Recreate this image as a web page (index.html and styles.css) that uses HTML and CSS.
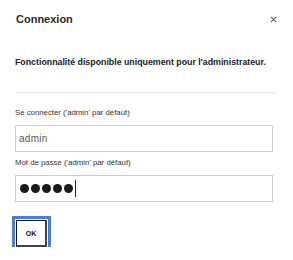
FILE: index.html
```html
<!DOCTYPE html>
<html lang="fr">
<head>
<meta charset="utf-8">
<title>Connexion</title>
<link rel="stylesheet" href="styles.css">
</head>
<body>
<div class="dialog">
  <div class="header">
    <h1 class="title">Connexion</h1>
    <button class="close" type="button" aria-label="Fermer">
      <svg width="7" height="7" viewBox="0 0 7 7"><path d="M0.8 0.8L6.2 6.2M6.2 0.8L0.8 6.2" stroke="#666" stroke-width="1.1" fill="none"/></svg>
    </button>
  </div>
  <p class="notice">Fonctionnalité disponible uniquement pour l'administrateur.</p>
  <hr class="divider">
  <form class="form">
    <label class="label">Se connecter ('admin' par défaut)</label>
    <div class="field">admin</div>
    <label class="label">Mot de passe ('admin' par défaut)</label>
    <div class="field password"><span class="dot"></span><span class="dot"></span><span class="dot"></span><span class="dot"></span><span class="dot"></span><span class="caret"></span></div>
    <button class="ok" type="button">OK</button>
  </form>
</div>
</body>
</html>
```

FILE: styles.css
```css
html, body {
  margin: 0;
  padding: 0;
  background: #fff;
}
body {
  font-family: "Liberation Sans", Arial, sans-serif;
  color: #222;
}
.dialog {
  width: 293px;
  box-sizing: border-box;
  padding: 12px 16px 0 15px;
}
.header {
  display: flex;
  justify-content: space-between;
  align-items: center;
  height: 15px;
}
.title {
  margin: 0 0 0 1px;
  font-size: 11px;
  line-height: 15px;
  font-weight: bold;
  color: #2a2a2a;
}
.close {
  border: 0;
  background: none;
  padding: 0;
  width: 7px;
  height: 7px;
  display: flex;
}
.notice {
  margin: 30px 0 0;
  font-size: 8.8px;
  line-height: 11px;
  font-weight: bold;
  color: #222;
}
.divider {
  margin: 24px 0 0;
  border: 0;
  height: 1px;
  background: #e6e6e6;
}
.form {
  display: flex;
  flex-direction: column;
  align-items: flex-start;
}
.label {
  margin-top: 15px;
  font-size: 7.8px;
  line-height: 10px;
  color: #333;
}
.field {
  margin-top: 7px;
  width: 258px;
  height: 27px;
  box-sizing: border-box;
  border: 1px solid #cfcfcf;
  padding: 0 3px;
  display: flex;
  align-items: center;
  font-size: 10px;
  letter-spacing: 0.3px;
  color: #555;
}
.field + .label {
  margin-top: 6px;
}
.password {
  padding-left: 4px;
  gap: 2px;
}
.dot {
  width: 9px;
  height: 9px;
  border-radius: 50%;
  background: #1a1a1a;
}
.caret {
  width: 1px;
  height: 17px;
  background: #222;
  margin-left: 0;
}
.ok {
  margin: 18px 0 0 1px;
  width: 31px;
  height: 27px;
  box-sizing: border-box;
  background: #fff;
  border: 1px solid #111;
  border-right: 2px solid #444;
  border-bottom: 2px solid #444;
  outline: 3px solid #4a7bd8;
  outline-offset: 1px;
  font-family: "Liberation Sans", Arial, sans-serif;
  font-size: 7px;
  font-weight: bold;
  color: #111;
  padding: 0;
}
```
